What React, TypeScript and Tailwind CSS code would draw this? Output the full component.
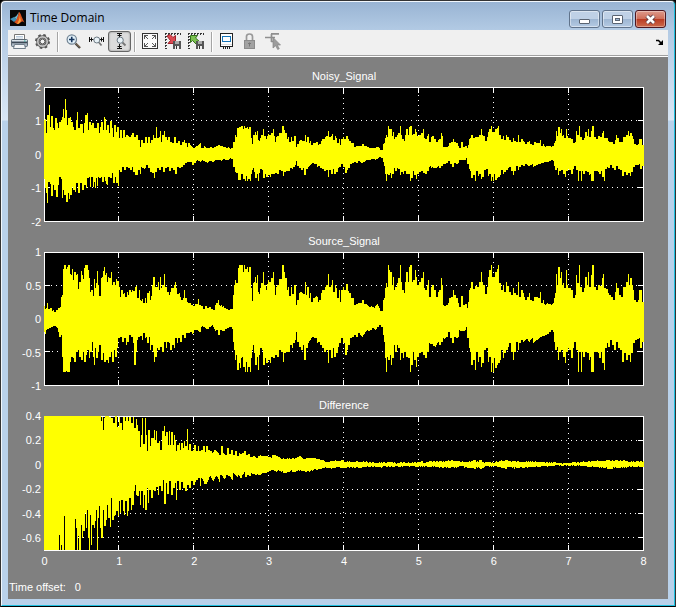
import React from "react";

// Traces are sampled at three units per pixel as flat x, y lists.
// Each section carries the offset that moves its samples onto the plot's own origin.
type Section = { dx: number; dy: number; s: number[] };
type Point = [number, number];

function points(sections: Section[]): Point[] {
  const out: Point[] = [];
  for (const { dx, dy, s } of sections) {
    for (let i = 0; i < s.length; i += 2) out.push([s[i] + dx, s[i + 1] + dy]);
  }
  return out;
}

const sourceTop = points([
  { dx: -132, dy: -51, s: [132,214,136,222,140,218,143,205,147,222,152,220,158,227,166,230,172,224,178,218,182,216,184,187,187,180,190,103,195,90,198,103,203,95,207,90,210,118,213,120,216,102,220,135,226,110,229,120,232,118,235,162,240,140,243,108,247,120,250,133,253,100,258,90,261,90,264,105,268,130,272,170,276,165,279,182,283,132,286,158,289,145,292,108,296,150,300,182,304,130,307,125,309,108,313,97,317,120,320,115,323,140,326,125,330,130,334,110,338,150,342,140,346,150,350,132,354,137,358,155,362,185,366,165,370,178,374,175,378,187,382,170,386,180,390,165,394,170,398,165,402,167,406,155,410,153,414,190,418,165,420,195,424,198,428,192,432,203,436,190,440,203,444,175,448,168,451,195,454,182,458,150,462,127,466,155,470,157,475,140,478,165,481,127,484,160,488,150,493,117,496,155,500,157,504,172,508,180,512,170,516,160,520,158,524,150,527,140,530,160,534,178,538,175,542,187,546,195,550,190,554,165,558,190,562,200,566,205,570,205,574,210,578,210,582,212,586,208,590,208,595,193,600,210,606,212,612,222,618,212,624,218,630,215,636,222,642,225,646,210,650,205,655,195,660,210,668,213,674,218,680,223,690,223,696,222,699,215,701,180,704,150,707,135,711,145,714,100,717,90] },
  { dx: 528, dy: -51, s: [0,210,12,215,20,222,28,225,36,222,40,212,43,180,46,135,49,150,54,90,57,90,66,90,70,110,74,90,78,103,82,95,86,110,90,97,93,160,96,197,99,145,102,140,105,127,108,145,111,120,114,170,118,178,122,160,126,145,131,110,135,150,138,165,142,148,146,135,150,140,155,130,160,110,163,150,166,180,170,155,174,150,178,133,184,132,190,90,194,112,198,130,202,165,206,155,210,183,214,155,218,176,224,150,229,210,233,195,238,175,243,172,248,175,252,178,256,140,260,180,264,155,268,190,272,175,276,200,282,190,290,185,296,200,300,195,304,175,308,165,312,165,317,155,321,150,325,117,329,155,334,150,337,135,342,170,345,150,349,160,354,190,358,165,362,200,366,165,370,155,374,165,380,148,385,168,390,175,395,190,400,190,406,210,412,208,418,203,424,205,428,195,434,207,440,208,448,215,456,215,464,218,471,205,478,218,482,228,487,228,489,195,492,190,495,160,498,145,501,155,505,90,509,105,513,110,516,150,520,125,523,165,528,155,532,145,537,130,541,90,545,140,549,165,553,175,557,140,561,110,565,140,569,95,573,90,577,140,581,135,586,105,590,125,594,150,600,142,606,130,610,110,614,160,618,165,622,150,626,135,630,185,634,155,640,150,645,165,650,185,655,170,660,165,665,130,668,150,671,210,678,212,686,205,690,190,695,185,700,165,705,180,710,190,716,205] },
  { dx: 1188, dy: -51, s: [0,165,4,135,8,170,10,210,18,210,25,200,32,190,36,178,40,165,44,180,48,190,54,210,60,215,65,182,70,210,78,208,82,220,84,200,88,165,92,158,96,140,102,162,108,152,114,155,119,142,124,110,128,140,132,150,138,178,142,155,145,125,149,105,154,90,158,125,164,125,168,110,172,103,176,90,180,145,185,165,190,150,194,170,200,140,204,152,210,170,215,180,220,160,225,175,230,180,235,140,240,185,246,165,250,175,254,185,258,195,264,185,268,175,272,195,278,198,284,185,290,187,296,190,302,172,305,205,310,195,315,208,322,205,328,208,335,208,340,205,342,190,346,175,349,117,352,150,357,97,360,130,363,110,366,150,370,145,375,160,378,105,381,150,385,160,390,160,396,165,402,190,406,180,410,120,413,145,418,90,422,155,428,172,434,160,438,125,442,150,446,110,450,155,454,120,460,90,464,155,470,165,476,150,482,152,487,130,491,117,495,160,500,162,505,175,510,180,516,185,521,195,526,170,530,145,534,160,540,180,546,185,550,155,556,155,560,140,565,117,569,150,573,130,577,150,581,165,585,195,590,200,596,195,600,165,604,165,608,200] },
]);

const sourceBottom = points([
  { dx: -132, dy: -51, s: [132,290,136,298,140,285,148,280,156,275,164,273,172,278,176,290,180,305,185,300,188,365,191,410,200,410,205,410,207,380,209,410,212,380,216,365,220,370,225,380,230,350,235,345,240,365,245,375,250,350,255,380,258,360,264,345,268,370,273,350,277,320,280,365,283,390,286,340,292,370,296,350,300,330,305,375,310,355,315,380,320,375,325,383,330,365,335,350,339,380,344,345,348,365,352,340,358,310,364,305,370,320,376,310,380,330,384,320,390,300,396,305,400,325,406,390,409,350,412,315,418,305,424,303,428,315,432,295,436,310,440,305,444,325,448,305,452,345,456,330,460,350,464,380,468,365,472,340,478,345,484,335,490,350,494,320,500,340,504,320,508,325,514,345,518,330,524,340,528,310,532,325,538,310,544,320,550,300,556,310,562,295,570,290,578,295,584,285,592,285,600,292,606,275,614,278,622,283,630,275,638,272,645,288,652,285,658,300,664,285,670,288,680,280,690,275,698,282,701,320,704,345,706,375,710,360,714,405,717,410] },
  { dx: 528, dy: -51, s: [0,290,6,285,16,282,24,275,34,275,39,290,43,320,47,345,50,365,55,410,58,385,61,400,64,370,68,365,72,395,76,410,79,380,83,410,87,395,91,410,94,370,97,345,100,330,104,355,108,390,111,365,114,405,118,360,122,340,128,345,132,390,136,370,140,385,146,375,152,385,156,365,162,370,168,360,174,365,180,345,185,350,190,380,194,355,200,350,206,350,212,330,218,340,222,325,226,315,230,290,234,320,240,335,246,345,250,330,256,375,260,340,266,325,274,310,280,305,288,310,292,325,298,320,304,330,310,340,316,350,322,345,326,385,330,345,336,370,340,340,346,365,350,355,355,335,360,325,366,310,372,325,378,360,382,345,388,330,394,310,400,305,406,300,412,305,418,295,426,305,432,300,440,285,450,288,458,278,466,285,474,275,480,270,486,275,490,300,494,320,498,370,500,410,503,365,507,375,511,360,515,390,519,370,523,330,527,350,532,330,537,340,541,375,545,355,550,370,556,350,561,365,567,370,571,410,575,390,580,350,586,375,590,395,594,365,600,355,606,350,612,360,618,370,624,350,630,325,638,330,646,335,654,320,660,330,666,320,672,310,680,305,686,290,692,310,698,325,704,305,710,310,716,305] },
  { dx: 1188, dy: -51, s: [0,330,4,320,10,305,18,300,24,290,28,305,34,318,40,325,46,305,52,300,58,285,66,290,74,285,80,275,84,310,88,340,92,350,96,390,101,375,106,405,110,350,115,380,119,365,124,395,130,385,135,345,141,340,145,380,149,365,155,410,158,385,161,410,164,370,168,400,172,390,177,385,181,375,186,345,190,370,196,355,200,345,205,335,210,325,215,350,221,375,225,350,230,320,236,345,240,325,246,315,252,320,260,310,268,320,276,310,282,325,290,315,298,310,306,305,314,300,322,298,330,290,336,285,340,290,344,320,348,345,352,335,356,375,360,350,366,345,372,365,376,385,380,350,385,340,390,345,396,370,400,340,406,320,412,345,416,410,420,350,424,410,428,350,432,365,438,350,444,355,448,375,452,365,455,410,460,410,464,350,470,350,476,355,480,370,484,350,488,385,493,405,497,340,502,325,508,335,514,315,520,330,526,345,532,320,538,340,544,345,550,380,556,355,562,375,566,360,571,380,576,355,582,325,588,315,596,310,602,340,608,320] },
]);

// Past the third second the noise is gone, so the noisy trace is the source at half scale.
const halved = (trace: Point[]): Point[] =>
  trace.filter(([x]) => x > 586).map(([x, y]): Point => [x, 200 + (y - 199) * 0.52]);

const noisyTop = [
  ...points([
    { dx: -132, dy: -81, s: [132,180,136,178,140,220,144,165,149,135,152,200,156,168,160,205,164,210,168,175,172,190,176,205,180,185,184,180,188,170,191,147,194,175,196,117,200,150,203,195,207,175,212,170,216,185,220,200,226,210,230,180,233,155,237,205,241,192,246,192,249,220,253,190,258,165,262,160,266,210,270,185,274,195,278,190,283,205,288,205,293,190,298,220,302,200,306,185,310,210,314,172,317,178,320,210,324,195,328,220,333,182,338,205,341,230,345,195,348,215,352,200,356,200,358,235,362,210,367,235,372,210,376,230,382,225,390,232,394,225,400,220,405,230,410,225,416,240,421,260,426,240,432,250,438,232,442,250,447,230,450,250,456,240,460,225,464,235,469,202,473,235,478,230,481,212,485,245,488,225,493,213,497,230,502,240,508,232,514,245,520,250,526,232,530,250,536,243,542,255,548,245,554,240,558,250,562,260,568,250,575,260,582,263,590,258,600,250,606,265,614,258,622,265,630,262,640,265,648,258,656,255,664,258,672,260,680,262,690,265,698,262,702,245,706,225,710,230,714,205,717,200] },
  ]),
  ...halved(sourceTop),
];

const noisyBottom = [
  ...points([
    { dx: -132, dy: -81, s: [132,357,136,385,140,400,143,428,147,365,152,372,156,408,160,375,166,390,170,410,175,375,180,350,183,358,187,415,191,390,195,405,200,425,205,400,209,418,213,405,218,380,222,390,227,395,231,370,235,400,239,400,243,370,248,390,254,375,259,385,263,355,268,350,272,380,276,350,280,380,283,365,285,383,289,355,292,378,296,350,300,355,305,352,309,367,313,350,320,375,326,350,332,355,338,340,341,370,346,350,350,370,355,378,358,330,364,335,370,320,376,330,382,320,388,325,394,330,398,320,402,335,407,345,412,345,418,330,422,342,426,320,434,325,440,315,446,325,452,335,458,340,464,355,468,335,474,325,480,330,486,320,492,335,498,325,504,322,510,332,516,325,522,330,527,342,532,320,540,325,546,320,552,315,558,310,564,305,572,305,578,315,584,310,592,300,600,305,608,302,616,305,624,308,632,302,640,305,648,300,656,300,664,302,672,298,682,300,690,295,698,298,702,320,706,335,710,340,716,360] },
  ]),
  ...halved(sourceBottom),
];

const differenceTop = points([
  { dx: -132, dy: -64, s: [132,64,300,64,304,80,308,68,310,105,313,70,318,64,324,64,330,68,336,70,341,85,346,64,350,64,354,97,358,66,362,85,367,107,371,68,376,80,380,66,386,80,390,66,396,85,400,66,405,100,409,72,412,90,416,110,421,158,424,120,427,70,431,147,434,147,437,70,440,120,443,170,447,105,450,155,454,130,458,130,463,105,467,135,470,110,474,145,478,140,484,165,489,110,493,93,497,125,501,113,504,150,508,110,512,150,516,112,520,150,523,120,526,135,530,170,534,150,538,145,542,165,546,145,550,160,554,140,558,155,562,102,566,165,570,148,575,170,580,165,585,150,590,170,596,155,600,170,606,165,611,153,616,172,620,155,626,165,632,170,638,175,646,165,654,175,660,180,666,155,670,175,678,180,684,160,690,178,696,165,702,180,708,170,714,185,718,170] },
  { dx: 528, dy: -64, s: [0,178,7,153,11,178,16,160,20,175,26,182,30,168,34,182,38,178,42,168,46,185,52,170,57,175,62,178,68,175,74,170,80,182,86,178,92,188,100,185,110,188,120,182,130,185,138,183,146,185,154,190,160,180,168,182,176,186,184,192,200,190,215,192,228,190,241,183,250,192,265,190,284,190,296,195,310,196,320,202,345,198,369,197,372,201,395,200,420,201,460,203,500,203,510,201,530,205,548,202,560,205,590,202,606,199,612,204,634,200,650,201,672,199,690,199,716,199] },
  { dx: 1188, dy: -64, s: [0,199,28,198,45,202,60,200,85,202,106,195,109,201,124,196,128,203,160,204,178,199,202,195,206,200,232,200,250,203,286,200,300,202,330,203,345,202,352,205,385,205,400,203,436,201,455,200,471,198,490,199,508,195,512,199,531,195,536,199,551,198,568,201,590,200,608,201] },
]);

const differenceBottom = points([
  { dx: -132, dy: -64, s: [132,466,175,466,178,420,181,466,184,450,187,466,190,466,193,364,196,466,219,466,223,466,226,372,230,400,233,466,236,425,240,466,244,390,248,430,252,410,256,355,258,400,261,345,264,430,267,466,270,360,274,450,278,390,283,400,287,380,290,345,293,466,296,370,299,335,302,400,306,430,311,345,315,395,319,375,323,330,327,370,331,398,335,310,339,375,343,365,347,360,351,350,355,365,358,320,362,355,366,315,370,350,374,360,378,320,382,365,386,350,390,310,394,345,399,330,402,290,406,270,410,300,414,305,418,290,422,330,426,290,430,340,434,300,438,345,442,280,446,325,450,285,455,310,460,285,465,290,470,278,475,300,480,275,486,290,490,255,495,327,499,265,504,298,510,260,516,300,522,280,526,265,530,315,534,258,540,285,546,262,552,280,558,290,564,270,570,280,576,258,582,270,590,255,596,250,601,275,606,250,614,270,622,262,630,245,640,260,650,240,658,262,664,240,672,255,680,240,688,245,696,255,702,235,710,248,716,240] },
  { dx: 528, dy: -64, s: [0,255,4,263,8,245,14,240,19,255,25,250,32,238,40,240,45,235,52,252,58,245,64,250,72,232,78,248,84,240,90,245,96,236,104,242,112,238,120,242,128,234,138,236,146,232,156,226,166,230,176,228,186,232,200,235,212,228,225,232,240,226,258,233,270,230,280,226,290,225,304,222,312,218,335,220,355,218,370,220,395,217,410,219,440,215,460,216,486,218,490,215,520,216,560,213,590,217,600,215,640,217,675,218,716,218] },
  { dx: 1188, dy: -64, s: [0,218,45,219,60,215,85,219,106,223,110,217,122,221,140,214,165,214,180,218,199,223,205,218,222,220,240,217,270,218,300,215,350,213,385,213,415,213,440,215,470,217,490,219,517,223,520,217,530,220,555,218,575,215,608,217] },
]);

function jitter(n: number): number {
  const v = Math.sin(n * 12.9898) * 43758.5453;
  return v - Math.floor(v) - 0.5;
}

// Pixel height of a trace in one column: the nearest sample where samples are dense,
// a slightly rough line between them where they are sparse.
function level(trace: Point[], column: number, max: number): number {
  const u = column * 3 + 1;
  let i = trace.findIndex(([x]) => x > u);
  if (i < 0) i = trace.length - 1;
  const [ax, ay] = trace[Math.max(0, i - 1)];
  const [bx, by] = trace[i];
  let y: number;
  if (bx - ax > 6 && u > ax) {
    y = ay + ((by - ay) * Math.min(1, (u - ax) / (bx - ax)));
    if (y > 0 && y < max * 3 - 3) y += jitter(column + ay) * 4;
  } else {
    y = u - ax < bx - u ? ay : by;
  }
  return Math.max(0, Math.min(max, Math.round(y / 3)));
}

function envelope(top: Point[], bottom: Point[], height: number): string {
  let d = "";
  for (let x = 0; x < 600; x++) {
    const a = level(top, x, height);
    const b = Math.max(a + 1, level(bottom, x, height));
    d += `M${x} ${a}h1V${b}h-1z`;
  }
  return d;
}

type PlotData = {
  title: string;
  labels: string[];
  grid: number[];
  height: number;
  frame: string;
  axis: string;
  top: Point[];
  bottom: Point[];
};

const plots: PlotData[] = [
  { title: "Noisy_Signal", labels: ["2", "1", "0", "-1", "-2"], grid: [33, 67, 100], height: 135, frame: "h-[135px]", axis: "h-[147px]", top: noisyTop, bottom: noisyBottom },
  { title: "Source_Signal", labels: ["1", "0.5", "0", "-0.5", "-1"], grid: [33, 66, 99], height: 134, frame: "h-[134px]", axis: "h-[146px]", top: sourceTop, bottom: sourceBottom },
  { title: "Difference", labels: ["0.4", "0.2", "0", "-0.2", "-0.4", "-0.6"], grid: [24, 48, 73, 97, 121], height: 135, frame: "h-[135px]", axis: "h-[134px]", top: differenceTop, bottom: differenceBottom },
];

const seconds = ["0", "1", "2", "3", "4", "5", "6", "7", "8"];

function Plot({ title, labels, grid, height, frame, axis, top, bottom }: PlotData) {
  return (
    <section>
      <h2 className="mb-[3px] pl-9 pr-6 text-center leading-4">{title}</h2>
      <div className="flex items-start pr-6">
        <div className={`-my-[6px] mr-[3px] flex w-[33px] shrink-0 flex-col justify-between text-right leading-3 ${axis}`}>
          {labels.map((l) => (
            <span key={l}>{l}</span>
          ))}
        </div>
        <svg className={`block min-w-0 flex-1 bg-black ${frame}`} viewBox={`0 0 600 ${height}`} preserveAspectRatio="none" shapeRendering="crispEdges" role="img" aria-label={title}>
          <g stroke="#fff" fill="none">
            {grid.map((y, i) => (
              <g key={y}>
                <path d={`M${2 + ((i * 3) % 5)} ${y + 0.5}H599`} strokeDasharray="1 4" />
                <path d={`M0 ${y + 0.5}h6M594 ${y + 0.5}h6`} />
              </g>
            ))}
            {[74, 149, 224, 299, 374, 449, 524].map((x, i) => (
              <g key={x}>
                <path d={`M${x + 0.5} ${5 + ((i * 2) % 5)}V${height}`} strokeDasharray="1 4" />
                <path d={`M${x + 0.5} 0v6M${x + 0.5} ${height - 6}v6`} />
              </g>
            ))}
            <rect x="0.5" y="0.5" width="599" height={height - 1} />
          </g>
          <path fill="#ff0" d={envelope(top, bottom, height)} />
        </svg>
      </div>
    </section>
  );
}

function Icon({ children, crisp }: { children: React.ReactNode; crisp?: boolean }) {
  return (
    <svg width="17" height="17" viewBox="0 0 17 17" fill="none" shapeRendering={crisp ? "crispEdges" : undefined} aria-hidden="true">
      {children}
    </svg>
  );
}

const Floppy = () => (
  <>
    <path d="M8 8h8v8h-8z" fill="#555" />
    <path d="M10 8h4v3h-4z" fill="#aaa" />
    <path d="M10 13h4v3h-4z" fill="#eee" />
    <path d="M11 13h1v3h-1z" fill="#333" />
  </>
);

const Ruler = () => (
  <path d="M0 .5h16M.5 0v16M3.5 0v2M6.5 0v2M9.5 0v2M12.5 0v2M15.5 0v2M0 3.5h2M0 6.5h2M0 9.5h2M0 12.5h2M0 15.5h2" stroke="#333" strokeDasharray="2 1" />
);

const tools: Record<string, React.ReactNode> = {
  Print: (
    <Icon>
      <path d="M3.5 6.500V1.500h10v5" fill="#fff" stroke="#777" />
      <path d="M5 3.500h7M5 5h7" stroke="#bcd" />
      <rect x=".5" y="6.500" width="16" height="7" rx="1" fill="#aab7c3" stroke="#5d6a76" />
      <path d="M1 9.500h15" stroke="#3c4854" strokeWidth="1.500" />
      <path d="M1 7.500h15" stroke="#dce4ea" />
      <path d="M3.500 11.500h10l1 4h-12z" fill="#f4f6f8" stroke="#72808c" />
      <path d="M13 8h1.500" stroke="#3a9" />
    </Icon>
  ),
  Parameters: (
    <Icon>
      <circle cx="8.500" cy="8.500" r="6.300" stroke="#555" strokeWidth="2.400" strokeDasharray="2.500 2.450" />
      <circle cx="8.500" cy="8.500" r="4.600" stroke="#555" strokeWidth="3.400" />
      <circle cx="8.500" cy="8.500" r="4.700" stroke="#c4c4c4" strokeWidth="1.700" />
      <circle cx="8.500" cy="8.500" r="2.500" fill="#f5f5f5" stroke="#444" />
    </Icon>
  ),
  "Zoom in": (
    <Icon>
      <path d="M10.500 10.500l4.500 4.500" stroke="#444" strokeWidth="2.400" />
      <path d="M11 10.500l4 4" stroke="#b08c5c" strokeWidth=".8" />
      <circle cx="6.800" cy="6.500" r="4.700" fill="#e2f1fa" stroke="#708292" strokeWidth="1.200" />
      <path d="M4 6.500h5.500M6.750 3.750v5.500" stroke="#16365e" strokeWidth="1.600" />
    </Icon>
  ),
  "Zoom X-axis": (
    <Icon>
      <path d="M1.500 4v5M1.500 6.500h4M3.500 4.500v4M15.500 4v5M12 6.500h4M13.500 4.500v4" stroke="#111" />
      <path d="M11 9.500l2.500 3" stroke="#777" strokeWidth="1.800" />
      <circle cx="8.800" cy="7" r="3" fill="#e9f2f7" stroke="#6b7882" />
    </Icon>
  ),
  "Zoom Y-axis": (
    <Icon>
      <path d="M6 .5h5M8.500 0v4M6.500 2.500h4M6 15.500h5M8.500 11v5M6.500 13.500h4" stroke="#111" />
      <path d="M11.500 9.500l3 3" stroke="#777" strokeWidth="1.800" />
      <circle cx="9.200" cy="7.200" r="3.100" fill="#e9f2f7" stroke="#6b7882" />
    </Icon>
  ),
  Autoscale: (
    <Icon crisp>
      <path d="M.5 .5h15v15h-15z" fill="#fafafa" stroke="#333" />
      <path d="M2.500 6V2.500H6M3 3l3 3M10 2.500h3.500V6M13 3l-3 3M2.500 10v3.500H6M3 13l3-3M10 13.500h3.500V10M13 13l-3-3" stroke="#555" />
    </Icon>
  ),
  "Save axes": (
    <Icon>
      <Ruler />
      <path d="M2 3l3-1.500 3 3L10.500 2.500V10.500H3L5.500 7.500z" fill="#dd4a52" stroke="#a1222b" />
      <Floppy />
    </Icon>
  ),
  "Restore axes": (
    <Icon>
      <Ruler />
      <path d="M2.500 2.500h7L7.500 5l4 3.500L8.500 11.500l-4-4L2.500 9.500z" fill="#7cc250" stroke="#35701d" />
      <Floppy />
    </Icon>
  ),
  "Floating scope": (
    <Icon crisp>
      <path d="M1.500 .5h12v13h-12z" fill="#fff" stroke="#222" />
      <path d="M3.500 3.500h8v5h-8z" fill="#fff" stroke="#1674b8" />
      <path d="M2 11.500h11" stroke="#ddd" />
      <path d="M4.500 13v3M6.500 13v3M8.500 13v3M10.500 13v3" stroke="#222" />
    </Icon>
  ),
  Lock: (
    <Icon>
      <path d="M4.500 8V3.500q0-2.500 3-2.500t3 2.500V8" stroke="#999" strokeWidth="1.700" />
      <rect x="2.500" y="7.500" width="10" height="8" fill="#a2a2a2" stroke="#8b8b8b" />
      <path d="M7.500 9.500v4M6 10.500h3" stroke="#777" />
    </Icon>
  ),
  "Signal selector": (
    <Icon>
      <path d="M0 4.500h10M6 .8h8M6.500 1v8M6 8.500h4" stroke="#8f8f8f" strokeWidth="1.700" />
      <path d="M8 4.500l7.500 7.500h-3.200l2 3.700-1.600.8-2-3.800L8 15z" fill="#9c9c9c" stroke="#858585" strokeWidth=".7" />
    </Icon>
  ),
};

const groups = [
  ["Print", "Parameters"],
  ["Zoom in", "Zoom X-axis", "Zoom Y-axis"],
  ["Autoscale", "Save axes", "Restore axes"],
  ["Floating scope", "Lock", "Signal selector"],
];

const captionButton =
  "flex h-[18px] w-[31px] items-center justify-center rounded-[3px] border border-[#60738b] shadow-[inset_0_0_0_1px_rgba(255,255,255,0.45)]";

export default function App() {
  return (
    <div className="flex min-h-screen flex-col bg-black">
      <div className="flex flex-1 flex-col rounded-t-[5px] border border-x-[#333] border-b-black border-t-[#333]">
        <div className="flex flex-1 flex-col rounded-t-[4px] border border-b-[#1fc0e0] border-l-[#f2f7fc] border-r-[#1fc0e0] border-t-[#f2f7fc] bg-[#b9d1ea] bg-[linear-gradient(#99b4d3,#b2cae4_28px,#bcd1e8_50px,#dae7f5_118px,#b9d1ea_119px)] pb-[6px] pl-[6px] pr-[6px]">
          <header className="flex h-7 items-start justify-between pl-[2px]">
            <div className="flex items-center pt-2">
              <svg className="mr-1 block" width="16" height="16" viewBox="0 0 16 16" aria-hidden="true">
                <path d="M0 0h16v16H0z" fill="#080808" />
                <path d="M0 9l4-2 3 3-3 2z" fill="#3f8fb5" />
                <path d="M4 7c2 0 3-2 5-5L7 10z" fill="#6ab7cf" />
                <path d="M9 2c2 1 3 7 6 11-2-2-3-2-5 0-1 1-2 1-3 1l-3-2c2 0 4-6 5-10z" fill="#d9521c" />
                <path d="M9 2c1 2 1 5 0 8l-2 4c2 0 3-2 4-3-1-3-1-6-2-9z" fill="#f7a73a" />
              </svg>
              <h1 className="font-['Open_Sans',sans-serif] text-[12px] leading-4 text-black">Time Domain</h1>
            </div>
            <div className="mr-[2px] flex gap-[2px] pt-2">
              <button aria-label="Minimize" className={`${captionButton} bg-[linear-gradient(#bfd1e6_50%,#9db6d2_50%,#b4cae3)]`}>
                <span className="mt-1 h-[5px] w-[11px] rounded-[1px] border border-[#5a6472] bg-white" />
              </button>
              <button aria-label="Maximize" className={`${captionButton} bg-[linear-gradient(#bfd1e6_50%,#9db6d2_50%,#b4cae3)]`}>
                <span className="flex h-[9px] w-[11px] items-center justify-center rounded-[1px] border border-[#5a6472] bg-white">
                  <span className="h-[3px] w-[5px] border border-[#5a6472] bg-[#9db6d2]" />
                </span>
              </button>
              <button aria-label="Close" className="flex h-[18px] w-[31px] items-center justify-center rounded-[3px] border border-[#4d1620] bg-[linear-gradient(#dd9a8c,#cf6d58_50%,#b93a22_50%,#cc6a4c)] shadow-[inset_0_0_0_1px_rgba(255,255,255,0.35)]">
                <svg width="13" height="11" viewBox="0 0 13 11" aria-hidden="true">
                  <path d="M3 2l7 7M10 2L3 9" stroke="#5b3b45" strokeWidth="4.400" />
                  <path d="M3 2l7 7M10 2L3 9" stroke="#fff" strokeWidth="2.600" />
                </svg>
              </button>
            </div>
          </header>

          <div className="flex flex-1 flex-col bg-[#808080]">
            <div role="toolbar" className="flex h-[25px] shrink-0 items-start bg-[#f0f0f0] pt-px">
              {groups.map((group, g) => (
                <div key={g} className="flex">
                  {g > 0 && <span className="mx-[3px] mt-px h-5 w-[2px] border-l border-r border-l-[#a5a5a5] border-r-white" />}
                  {group.map((name) => (
                    <button
                      key={name}
                      aria-label={name}
                      title={name}
                      className={
                        name === "Zoom Y-axis"
                          ? "flex h-[21px] w-[23px] items-center justify-center rounded-[3px] border border-[#666] bg-[#dcdcdc] shadow-[inset_0_0_2px_#777]"
                          : "flex h-[21px] w-[23px] items-center justify-center"
                      }
                    >
                      {tools[name]}
                    </button>
                  ))}
                </div>
              ))}
              <button aria-label="Dock" className="ml-auto mr-1 mt-2">
                <svg className="block" width="8" height="7" viewBox="0 0 8 7" aria-hidden="true">
                  <path d="M0 1.500h2.500L6 5" stroke="#000" strokeWidth="1.600" fill="none" />
                  <path d="M7 1v5H2z" fill="#000" />
                </svg>
              </button>
            </div>
            <div className="h-[2px] shrink-0 border-b border-t border-b-white border-t-[#a0a0a0]" />

            <main className="flex flex-1 flex-col font-['Liberation_Sans',Arial,sans-serif] text-[11px] text-white">
              <div className="flex flex-col gap-[11px] pt-[11px]">
                {plots.map((p) => (
                  <Plot key={p.title} {...p} />
                ))}
              </div>
              <div className="ml-9 mr-6 mt-[2px] flex justify-between leading-4">
                {seconds.map((s) => (
                  <span key={s} className="flex w-px justify-center">
                    {s}
                  </span>
                ))}
              </div>
              <footer className="mt-auto flex gap-[9px] pb-1 pl-px leading-4">
                <span>Time offset:</span>
                <span>0</span>
              </footer>
            </main>
          </div>
        </div>
      </div>
    </div>
  );
}
